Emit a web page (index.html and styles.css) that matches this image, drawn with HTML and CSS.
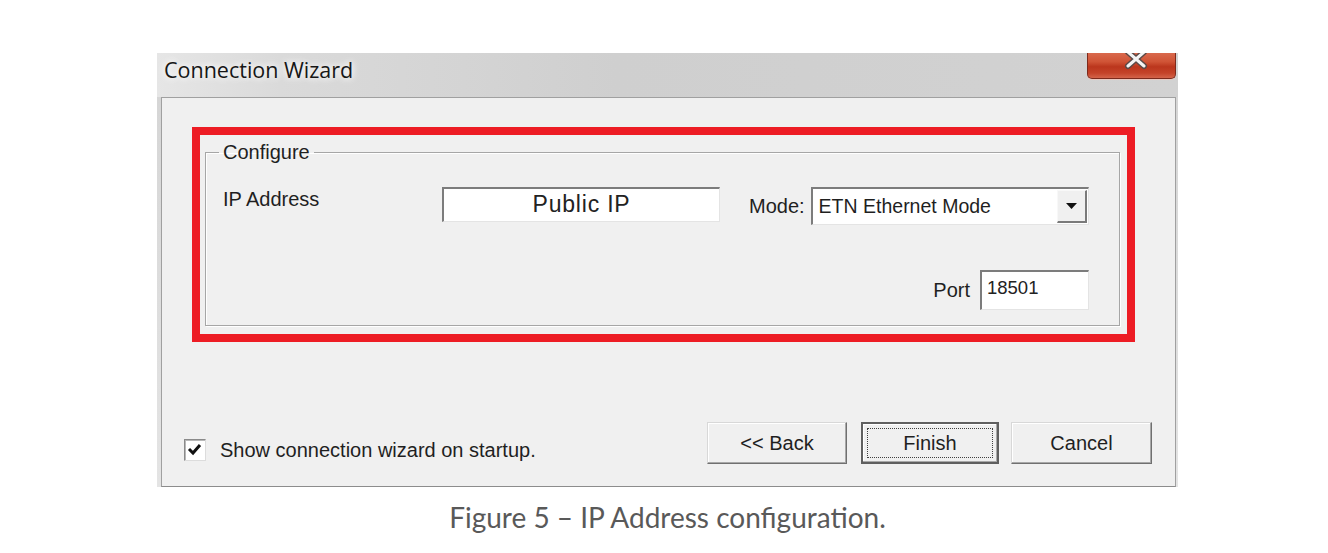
FILE: index.html
```html
<!DOCTYPE html>
<html lang="en">
<head>
  <meta charset="UTF-8">
  <title>Connection Wizard</title>
  <link rel="stylesheet" href="styles.css">
</head>
<body>
  <div class="figure">
    <div class="window">
      <div class="titlebar">
        <span class="title">Connection Wizard</span>
        <div class="close-btn">
          <svg width="89" height="26" viewBox="0 0 89 26">
            <path d="M40 0 L56 14 M56 0 L40 14" stroke="#5a4a48" stroke-width="6" stroke-linecap="round" fill="none"/>
            <path d="M40 0 L56 14 M56 0 L40 14" stroke="#f4f4f4" stroke-width="3" stroke-linecap="round" fill="none"/>
          </svg>
        </div>
      </div>
      <div class="content">
        <div class="highlight">
          <fieldset class="group">
            <legend>Configure</legend>
            <div class="row">
              <span class="label ip-label">IP Address</span>
              <div class="field ip-field">Public IP</div>
              <div class="mode">
                <span class="label mode-label">Mode:</span>
                <div class="select">
                  <span class="select-value">ETN Ethernet Mode</span>
                  <span class="select-btn">
                    <svg width="11" height="6" viewBox="0 0 11 6"><path d="M0 0 H11 L5.5 6 Z" fill="#111"/></svg>
                  </span>
                </div>
              </div>
            </div>
            <div class="row row-port">
              <span class="label port-label">Port</span>
              <div class="field port-field">18501</div>
            </div>
          </fieldset>
        </div>
        <div class="footer">
          <label class="check">
            <span class="check-box">
              <svg width="20" height="20" viewBox="0 0 20 20"><path d="M4 9 L8 13 L15 5" stroke="#111" stroke-width="3" fill="none"/></svg>
            </span>
            Show connection wizard on startup.
          </label>
          <div class="buttons">
            <button class="btn btn-back">&lt;&lt; Back</button>
            <button class="btn btn-finish">Finish</button>
            <button class="btn btn-cancel">Cancel</button>
          </div>
        </div>
      </div>
    </div>
    <p class="caption">Figure 5 – IP Address configuration.</p>
  </div>
</body>
</html>
```

FILE: styles.css
```css
body { margin: 0; background: #fff; font-family: "Liberation Sans", Arial, sans-serif; color: #1f1f1f; }
.figure { width: 1021px; margin-left: 157px; padding-top: 53px; }

/* window chrome */
.window { background: linear-gradient(to bottom, #d4d4d4, #e4e4e4); }
.titlebar { display: flex; align-items: flex-start; height: 44px; background: linear-gradient(to right, #e6e6e6 0, #dadada 12%, #cfcfcf 45%, #d2d2d2 100%); }
.title { font-family: "Open Sans", sans-serif; font-size: 21.5px; line-height: 26px; margin: 4px 0 0 7px; color: #161616; text-shadow: 0 0 6px #fff, 0 0 10px #fff; }
.close-btn { margin-left: auto; margin-right: 2px; width: 89px; height: 26px; box-sizing: border-box; border: 1px solid #7d2a1c; border-top: none; border-radius: 0 0 5px 5px; background: linear-gradient(to bottom, #d9694d 0, #d05436 35%, #bb361d 55%, #c44329 80%, #d46349 100%); box-shadow: 0 1px 0 #e9c8c0; overflow: hidden; }
.close-btn svg { display: block; margin-top: -1px; }

.content { margin: 0 2px 0 4px; height: 390px; box-sizing: border-box; background: #f0f0f0; border: 1px solid #a0a0a0; border-bottom-color: #8c8c8c; padding: 29px 23px 0 22px; }

/* red highlight around the group box */
.highlight { width: 943px; margin-left: 8px; box-sizing: border-box; border: 8px solid #ed1c24; padding: 6px 7px 8px 5px; }
.group { margin: 0; padding: 0 30px 15px 17px; border: 1px solid #a6a6a6; box-shadow: 1px 1px 0 #fff, inset 1px 1px 0 #fff; min-width: 0; }
.group legend { font-size: 20px; line-height: 22px; padding: 0 4px; margin-left: -4px; color: #1f1f1f; }

.row { display: flex; align-items: flex-start; margin-top: 24px; }
.row-port { justify-content: flex-end; align-items: center; margin-top: 45px; }
.label { font-size: 20px; line-height: 24px; white-space: nowrap; }
.ip-label { width: 219px; }
.mode { display: flex; align-items: center; margin-left: 29px; height: 38px; }
.mode-label { margin-right: 6px; }
.port-label { margin-right: 10px; }

.field, .select { box-sizing: border-box; background: #fff; border-style: solid; border-width: 2px 1px 1px 2px; border-color: #7c7c7c #e4e4e4 #e4e4e4 #7c7c7c; }
.ip-field { width: 278px; height: 35px; font-size: 23px; letter-spacing: 0.8px; line-height: 31px; text-align: center; color: #222; }
.port-field { width: 109px; height: 40px; font-size: 18.5px; line-height: 22px; padding: 5px 0 0 5px; color: #222; }

.select { display: flex; align-items: stretch; width: 278px; height: 38px; }
.select-value { flex: 1; font-size: 19.5px; line-height: 34px; padding-left: 6px; white-space: nowrap; }
.select-btn { display: flex; align-items: center; justify-content: center; width: 30px; margin: 1px 1px 1px 0; box-sizing: border-box; background: #f0f0f0; border-style: solid; border-width: 1px 2px 2px 1px; border-color: #f8f8f8 #7a7a7a #7a7a7a #f8f8f8; }

/* bottom row */
.footer { display: flex; justify-content: space-between; align-items: flex-start; margin-top: 80px; }
.check { display: flex; align-items: center; margin-top: 17px; font-size: 20px; line-height: 22px; white-space: nowrap; }
.check-box { display: flex; align-items: center; justify-content: center; width: 22px; height: 22px; margin-right: 14px; box-sizing: border-box; background: #fff; border: 1px solid; border-color: #8a8a8a #dcdcdc #dcdcdc #8a8a8a; box-shadow: inset 1px 1px 0 #b8b8b8; }
.buttons { display: flex; }
.btn { height: 42px; width: 140px; padding: 0; font-family: "Liberation Sans", Arial, sans-serif; font-size: 20px; color: #1f1f1f; background: #f0f0f0; border: 1px solid; border-color: #d8d8d8 #707070 #707070 #d8d8d8; box-shadow: inset -1px -1px 0 #a8a8a8, inset 1px 1px 0 #fff; }
.btn-finish { width: 138px; margin-left: 14px; border: 2px solid #5f5f5f; outline: 1px dotted #404040; outline-offset: -7px; }
.btn-cancel { width: 141px; margin-left: 12px; }

.caption { margin: 14px 0 0; text-align: center; font-family: Lato, sans-serif; font-size: 28px; line-height: 32px; color: #595959; }
```
